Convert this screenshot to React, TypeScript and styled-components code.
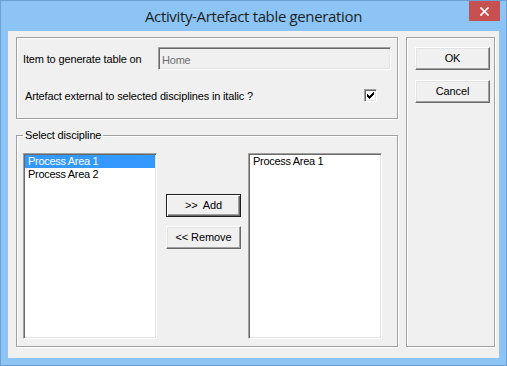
import React from "react";
import styled, { createGlobalStyle, css } from "styled-components";

const GlobalStyle = createGlobalStyle`
  html, body { margin: 0; padding: 0; }
  body {
    font-family: "Liberation Sans", Arial, sans-serif;
    font-size: 11px;
    color: #000;
    background: #8cc5f5;
  }
  * { box-sizing: border-box; }
`;

const sunken = css`
  border: 1px solid;
  border-color: #a0a0a0 #ffffff #ffffff #a0a0a0;
  box-shadow: inset 1px 1px 0 #696969, inset -1px -1px 0 #e3e3e3;
`;

const Window = styled.div`
  width: 507px;
  height: 366px;
  border: 1px solid #6c9fd3;
  background: #8cc5f5;
  display: flex;
  flex-direction: column;
  padding: 0 7px 7px 7px;
`;

const TitleBar = styled.div`
  height: 30px;
  display: grid;
  grid-template-columns: 1fr auto 1fr;
  align-items: center;
  margin: 0 -7px;
`;

const Title = styled.span`
  grid-column: 2;
  font-family: "Open Sans", "Noto Sans", sans-serif;
  font-size: 15px;
  letter-spacing: -0.35px;
  color: #1f1f1f;
  white-space: nowrap;
  padding-bottom: 1px;
`;

const CloseButton = styled.div`
  grid-column: 3;
  justify-self: end;
  align-self: start;
  width: 31px;
  height: 20px;
  margin-right: 6px;
  background: #c75050;
  display: flex;
  align-items: center;
  justify-content: center;
`;

const Client = styled.div`
  flex: 1;
  background: #f0f0f0;
  display: flex;
  gap: 8px;
  padding: 6px 4px 11px 8px;
`;

const LeftColumn = styled.div`
  width: 382px;
  display: flex;
  flex-direction: column;
  gap: 16px;
`;

const GroupBox = styled.div`
  position: relative;
  border: 1px solid #a0a0a0;
  box-shadow: inset 1px 1px 0 #ffffff, 1px 1px 0 #ffffff;
`;

const TopGroup = styled(GroupBox)`
  height: 82px;
  padding: 9px 6px 0 6px;
`;

const DisciplineGroup = styled(GroupBox)`
  height: 212px;
  padding: 17px 15px 7px 6px;
  display: flex;
  align-items: flex-start;
`;

const ActionGroup = styled(GroupBox)`
  width: 89px;
  height: 310px;
  padding: 9px 0 0 8px;
  display: flex;
  flex-direction: column;
  gap: 10px;
`;

const Caption = styled.span`
  position: absolute;
  top: -7px;
  left: 6px;
  height: 13px;
  line-height: 13px;
  padding: 0 2px;
  background: #f0f0f0;
  letter-spacing: -0.15px;
`;

const FieldRow = styled.div`
  display: grid;
  grid-template-columns: 1fr 233px;
  align-items: center;
`;

const Label = styled.span`
  letter-spacing: -0.15px;
  white-space: nowrap;
`;

const Edit = styled.div`
  ${sunken};
  height: 23px;
  padding: 2px 3px 0 3px;
  display: flex;
  align-items: center;
  color: #6d6d6d;
  background: #f0f0f0;
  letter-spacing: -0.2px;
`;

const CheckRow = styled.div`
  margin-top: 19px;
  height: 13px;
  padding: 0 14px 0 2px;
  display: flex;
  align-items: center;
  justify-content: space-between;
`;

const CheckBox = styled.div`
  ${sunken};
  width: 13px;
  height: 13px;
  background: #ffffff;
  display: flex;
  align-items: center;
  justify-content: center;
`;

const ListBox = styled.div`
  ${sunken};
  width: 134px;
  height: 186px;
  background: #ffffff;
  padding: 1px;
`;

const ListItem = styled.div<{ $selected?: boolean }>`
  height: 13px;
  line-height: 13px;
  padding-left: 3px;
  white-space: nowrap;
  letter-spacing: -0.3px;
  background: ${(p) => (p.$selected ? "#3399ff" : "transparent")};
  color: ${(p) => (p.$selected ? "#ffffff" : "#000000")};
`;

const ButtonColumn = styled.div`
  display: flex;
  flex-direction: column;
  gap: 9px;
  padding-top: 41px;
  margin: 0 7px 0 9px;
`;

const PushButton = styled.div<{ $default?: boolean }>`
  width: 75px;
  height: 23px;
  background: #f0f0f0;
  display: flex;
  align-items: center;
  justify-content: center;
  white-space: pre;
  letter-spacing: -0.1px;
  padding-bottom: 1px;
  ${(p) =>
    p.$default
      ? css`
          border: 1px solid #1e1e1e;
          box-shadow: inset 1px 1px 0 #ffffff, inset -1px -1px 0 #696969,
            inset -2px -2px 0 #a0a0a0;
        `
      : css`
          border: 1px solid;
          border-color: #ffffff #696969 #696969 #ffffff;
          box-shadow: inset -1px -1px 0 #a0a0a0, inset 1px 1px 0 #e3e3e3;
        `}
`;

const CheckMark = () => (
  <svg width="7" height="7" viewBox="0 0 7 7" shapeRendering="crispEdges">
    <path
      fill="#000"
      d="M6 0h1v1H6zM5 1h2v1H5zM0 2h1v1H0zM4 2h3v1H4zM0 3h2v1H0zM3 3h3v1H3zM0 4h5v1H0zM1 5h3v1H1zM2 6h1v1H2z"
    />
  </svg>
);

const CloseIcon = () => (
  <svg width="9" height="9" viewBox="0 0 9 9">
    <path d="M1 1L8 8M8 1L1 8" stroke="#ffffff" strokeWidth="1.7" strokeLinecap="square" />
  </svg>
);

export default function App() {
  return (
    <>
      <GlobalStyle />
      <Window>
        <TitleBar>
          <Title>Activity-Artefact table generation</Title>
          <CloseButton>
            <CloseIcon />
          </CloseButton>
        </TitleBar>
        <Client>
          <LeftColumn>
            <TopGroup>
              <FieldRow>
                <Label>Item to generate table on</Label>
                <Edit>Home</Edit>
              </FieldRow>
              <CheckRow>
                <Label>Artefact external to selected disciplines in italic ?</Label>
                <CheckBox>
                  <CheckMark />
                </CheckBox>
              </CheckRow>
            </TopGroup>
            <DisciplineGroup>
              <Caption>Select discipline</Caption>
              <ListBox>
                <ListItem $selected>Process Area 1</ListItem>
                <ListItem>Process Area 2</ListItem>
              </ListBox>
              <ButtonColumn>
                <PushButton $default>{">>  Add"}</PushButton>
                <PushButton>{"<< Remove"}</PushButton>
              </ButtonColumn>
              <ListBox>
                <ListItem>Process Area 1</ListItem>
              </ListBox>
            </DisciplineGroup>
          </LeftColumn>
          <ActionGroup>
            <PushButton>OK</PushButton>
            <PushButton>Cancel</PushButton>
          </ActionGroup>
        </Client>
      </Window>
    </>
  );
}
